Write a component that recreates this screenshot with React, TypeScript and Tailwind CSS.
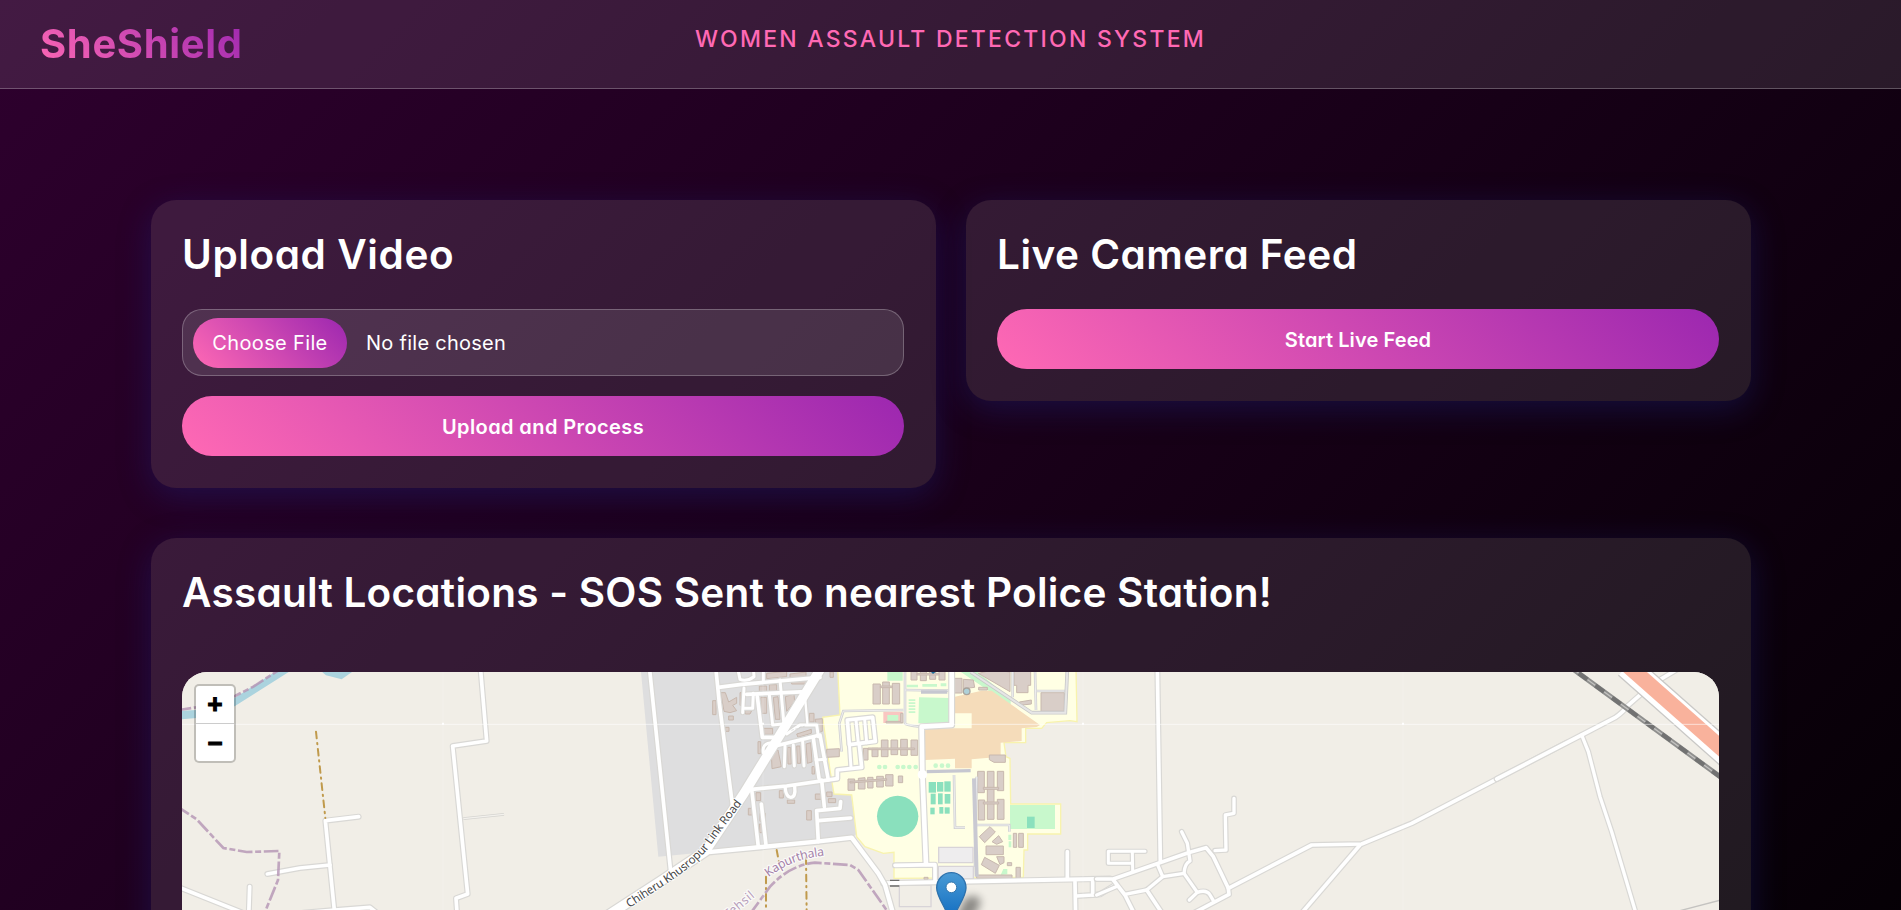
type Road = [d: string, width?: number];

function Roads({ items }: { items: Road[] }) {
  return (
    <g fill="none" strokeLinecap="round" strokeLinejoin="round">
      {items.map(([d, w = 11], i) => (
        <path key={`c${i}`} d={d} stroke="#d9d8d5" strokeWidth={w + 7} />
      ))}
      {items.map(([d, w = 11], i) => (
        <path key={`f${i}`} d={d} stroke="#ffffff" strokeWidth={w} />
      ))}
    </g>
  );
}

function Boundary({ d }: { d: string }) {
  return <path d={d} fill="none" stroke="#b493b4" strokeOpacity="0.8" strokeWidth="8" strokeDasharray="44 8 18 8" />;
}

function Track({ d }: { d: string }) {
  return <path d={d} fill="none" stroke="#c09a4c" strokeWidth="6" strokeLinecap="round" strokeDasharray="20 14 4 14" />;
}

const westRoads: Road[] = [
  ["M931 20L950 243L848 258L893 702L858 715L862 770"],
  ["M566 470L466 482L495 770"],
  ["M480 615L390 624L292 642"],
  ["M400 758L495 750L600 742L625 762"],
  ["M20 679L235 765"],
  ["M239 680L236 770"],
];

const townRoads: Road[] = [
  ["M148 20L212 635"],
  ["M347 20L358 130L398 440"],
  ["M355 82L425 73L660 52"],
  ["M440 103L620 95"],
  ["M412 20L420 58Q440 66 462 50L460 20", 9],
  ["M432 84L428 158", 9],
  ["M432 145L458 145L460 100", 9],
  ["M472 110L487 232L525 232"],
  ["M508 105L518 195L570 190", 9],
  ["M540 60L552 195", 9],
  ["M490 20L490 66", 9],
  ["M615 110L622 190", 7],
  ["M560 222L600 195L650 195L655 230", 9],
  ["M510 262L600 240L660 225L685 360"],
  ["M518 248Q485 248 490 278L510 270", 9],
  ["M555 258L553 320", 9],
  ["M580 255L583 318", 9],
  ["M608 245L612 318", 9],
  ["M640 235L657 355"],
  ["M648 300L676 298", 9],
  ["M455 388L560 378L712 356L712 330L785 322L778 255"],
  ["M742 180L818 172L826 244L748 254L742 180"],
  ["M748 250L753 322", 9],
  ["M768 180L775 250", 9],
  ["M794 178L800 248", 9],
  ["M455 388L475 560"],
  ["M484 432L498 555"],
  ["M555 380Q558 412 572 412Q588 412 584 380", 10],
  ["M665 360L673 440"],
  ["M722 425L720 445L650 452L655 545"],
  ["M655 482L752 474"],
  ["M310 578L650 545L755 533L835 640L855 675L882 770", 13],
  ["M668 16L432 400L315 575L180 665L10 775", 28],
];

const campusRoads: Road[] = [
  ["M305 20L305 195L215 200L217 340L228 612", 14],
  ["M135 616L255 614L255 665"],
  ["M100 670L780 656", 12],
  ["M652 575L652 655"],
  ["M675 665L677 770"],
  ["M728 665L728 705L680 708"],
  ["M728 705L750 703L800 672"],
];

const villageRoads: Road[] = [
  ["M172 20L181 605"],
  ["M-10 657L40 657L175 610L265 578L318 563L340 590L385 685L635 555L785 552L935 490L1400 248"],
  ["M345 572L378 570L376 465L402 460L402 415", 10],
  ["M245 515L262 550L270 603Q254 610 252 640L188 650L172 612", 10],
  ["M252 640L292 697L268 720", 10],
  ["M292 697Q320 688 330 705L340 722", 10],
  ["M385 685L387 703L270 765"],
  ["M188 650L140 690L75 703", 10],
  ["M140 690L190 765"],
  ["M40 660L75 705L105 765"],
  ["M-10 705L48 680", 10],
  ["M780 555L600 765"],
  ["M135 574L25 574L25 610L95 610", 9],
  ["M97 576L98 633", 9],
];

const eastRoads: Road[] = [
  ["M-10 417L245 285L345 233Q370 216 380 200L428 158"],
  ["M245 285L265 335L300 470L335 575L408 820", 10],
  ["M470 125L535 86"],
];

const serviceRoads = [
  "M165 30L165 190Q168 196 210 200",
  "M-25 275L-32 190L-20 153L160 150",
  "M165 90L295 92",
  "M312 345L315 503L345 503",
  "M380 495L478 495L478 515",
  "M488 30L488 112",
  "M555 30L558 150",
  "M560 93L648 93",
  "M375 620L380 350",
];

const townBuildings = [
  "M338 122h10v42h-10z", "M362 98h14l10 28 24-14v18l-12 6 12 16-20 6-18-4z", "M386 168h14v12h-14z", "M375 202h12v12h-12z",
  "M420 98h12v38h-12z", "M478 78h22v20h-22z", "M508 74h22v20h-22z", "M500 40l60-6v16l-60 6z", "M570 42l48-6v14l-48 4z",
  "M482 112h18v48h-18z", "M520 112l14-2 6 68h-14z", "M556 110l26-8 2 22-24 30z", "M490 205h28v18h-28z", "M474 245h8v36h-8z",
  "M514 280l20-10 10 50-28 6z", "M562 262l10 0 2 50h-10z", "M590 258l10 0 2 52h-10z", "M618 252l14-4 4 58-14 4z", "M628 160l14 0 0 26h-14z",
  "M645 178l22-2v38h-12z", "M680 268l38-2v24l-38 2z", "M538 392h12v22h-12z", "M562 420h22v10h-22z", "M468 398h14v24h-14z",
  "M445 445h12v20h-12z", "M480 460h16v24h-16z", "M478 492h10v26h-10z", "M620 452h14v28h-14z", "M646 402h18v16h-18z", "M680 396h16v14h-16z",
  "M685 416h22v12h-22z", "M636 320h8v22h-8z", "M590 222l44-14v12l-40 12z", "M575 60h50v12h-50z", "M690 36h10v16h-10z", "M436 148l20 2-6 12h-14z",
];

const campusBuildings = [
  "M69 72h22v60h-22z", "M98 66h20v66h-20z", "M127 70h22v62h-22z", "M91 78h36v5h-36z",
  "M183 30h18v30h-18z", "M211 30h18v32h-18z", "M239 30h18v28h-18z", "M267 30h18v30h-18z", "M201 40h66v5h-66z",
  "M573 98h70v56h-70z", "M310 55h26v44h-26z", "M340 58l30 2 4 22-34 4z", "M385 40L430 30L480 36L480 95z", "M492 30h50v46h-8v22h-34v-22h-8z",
  "M386 82h26v8h-26z", "M508 126l36-6v12l-36 4z",
  "M40 265h14v35h-14z", "M66 265h18v25h-18z", "M94 240h20v50h-20z", "M123 240h20v44h-20z", "M152 238h20v48h-20z", "M183 240h20v46h-20z", "M54 264h140v5h-140z",
  "M-6 357h20v34h-20z", "M25 355l20-2v34h-20z", "M53 352h16v32h-16z", "M80 349h20v32h-20z", "M107 344h22v34h-22z", "M145 348h13v20h-13z", "M0 364l110-8v5l-110 8z",
  "M383 334h20v64h-20z", "M412 334h20v144h-20z", "M442 334h19v58h-19z", "M385 420h19v60h-19z", "M442 418h20v60h-20z", "M400 382h46v6h-46z", "M400 426h46v6h-46z",
  "M388 530l32-30 16 16-32 32z", "M426 545l20-18 12 18-18 8z", "M408 558h52v26h-52z", "M440 590h22v18l-12 6z", "M404 592l44 24-12 24-42-26z",
  "M418 285h48v22h-34l-14-8z", "M490 520h10v42h-10z", "M506 520h14v42h-14z", "M498 622h13v32h-13z", "M472 608h13v9h-13z", "M380 645h106v10h-106z", "M108 184h50v5h-50z", "M152 160h7v28h-7z",
  "M222 652h12v6h-12z",
];

const courts = [
  "M236 366h22v32h-22z", "M261 366h19v29h-19z", "M283 364h19v31h-19z", "M242 401h15v32h-15z", "M264 400h14v33h-14z",
  "M284 402h17v29h-17z", "M241 443h13v20h-13z", "M268 441h12v20h-12z", "M284 442h15v19h-15z", "M531 470h23v34h-23z",
];

function MapCanvas() {
  return (
    <svg className="block" width="1538" height="238" viewBox="0 0 4614 714" fontFamily="'Noto Sans','Open Sans',sans-serif">
      <defs>
        <path id="link-road" d="M88 744L200 671Q270 626 320 572Q372 500 434 420" />
        <path id="district" d="M506 652Q575 596 674 587" />
        <path id="tehsil" d="M384 778L468 708" />
        <linearGradient id="pin" x1="0" y1="0" x2="0" y2="1">
          <stop offset="0" stopColor="#4a9bd5" />
          <stop offset="0.75" stopColor="#1a74c4" />
        </linearGradient>
        <filter id="soft" x="-50%" y="-50%" width="200%" height="200%">
          <feGaussianBlur stdDeviation="12" />
        </filter>
      </defs>
      <rect width="4614" height="714" fill="#f1eee7" />

      <g transform="translate(-36 -36)">
        <path fill="#abd3de" d="M20 153L80 150L190 116L315 36L325 26L372 26L195 138L150 160L80 174L20 179Z" />
        <path fill="#abd3de" d="M445 26L468 46L515 58L560 26Z" />
        <Boundary d="M20 151L78 142L195 108L250 80L330 28" />
        <Roads items={westRoads} />
        <path d="M880 476L1002 463" stroke="#d5d4d0" strokeWidth="8" />
        <path d="M880 476L1002 463" stroke="#f3f1ed" strokeWidth="4" />
        <Track d="M438 215L466 474" />
        <Boundary d="M20 438L80 478L160 564L230 576L328 573L324 660L280 768" />
      </g>

      <g transform="translate(1254 -36)">
        <path fill="#dededf" d="M122 26L175 590L300 578L760 530L772 520L752 400L668 172L720 165L712 26Z" />
      </g>

      <g transform="translate(2004 -36)">
        <path fill="#ffffe4" stroke="#f8f3ad" strokeWidth="4" d="M-37 26L-30 165L-82 172L-60 330L-48 402L5 405L20 530L45 560L100 580L132 577L132 655L520 652L522 570L533 570L533 522L632 522L632 432L482 432L480 295L468 290L462 248L527 248L527 205L575 205L590 188L660 182L681 185L678 26Z" />
        <g fill="#c8f8cc">
          <path d="M112 26H158V62H112ZM207 112L300 114V190H205ZM480 435H615V507H480ZM318 26H372L482 118V134L460 122Z" />
          <path d="M170 74h34v8h-34zM217 72h44v8h-44zM272 70h17v9h-17zM176 118h20v5h-20zM176 127h20v5h-20zM176 136h20v5h-20zM176 145h20v5h-20zM176 154h20v5h-20z" />
          <path d="M475 524h9v16h-9zM476 544h8v18h-8zM452 645l8-18h12v16z" />
          {[88, 105, 143, 160, 178, 197].map((x) => (
            <circle key={x} cx={x} cy="321" r="7" />
          ))}
          {[257, 276, 294].map((x) => (
            <circle key={x} cx={x} cy="317" r="7" />
          ))}
        </g>
        <path fill="#f5dcba" d="M315 110L395 92L425 92L570 195L560 201L515 205L515 243L452 248L452 290L365 298L365 325L315 325L315 296L225 300L225 205L365 205L365 160L315 160Z" />
        <path fill="#f9c6c1" d="M100 155h58v34h-58z" />
        <path fill="#c8f8cc" d="M112 165h33v18h-33z" />
        <circle cx="143" cy="469" r="62" fill="#8ae0bd" />
        <g fill="#8ae0bd">
          {courts.map((d) => (
            <path key={d} d={d} />
          ))}
        </g>
        <g fill="#eeedee" stroke="#d8d4d8" strokeWidth="4">
          <path d="M266 562h103v46h-103zM265 619h105v38h-105z" />
          <path fill="none" d="M148 675h95v65h-95z" />
        </g>
        <g fill="#d9cec8" stroke="#c8b8ae" strokeWidth="3">
          {campusBuildings.map((d) => (
            <path key={d} d={d} />
          ))}
        </g>
        <g fill="none" stroke="#d2d2d4" strokeWidth="8">
          {serviceRoads.map((d) => (
            <path key={d} d={d} />
          ))}
        </g>
        <g fill="none" stroke="#eeeeee" strokeWidth="3">
          {serviceRoads.map((d) => (
            <path key={d} d={d} />
          ))}
        </g>
        <path d="M230 335L362 332M213 96L292 96" stroke="#c6c7d0" strokeWidth="10" fill="none" />
        <path d="M372 355L380 650" stroke="#c9c9d2" strokeWidth="12" fill="none" />
        <path d="M362 36L545 158L646 158L652 30" stroke="#c9c9c9" strokeWidth="11" fill="none" />
        <path d="M362 36L545 158L646 158L652 30" stroke="#e6e6e6" strokeWidth="6" fill="none" />
        <circle cx="350" cy="94" r="10" fill="#aed0d8" stroke="#a9a39c" strokeWidth="4" />
        <path d="M243 36h14l-8 6z" fill="#1e6f9c" />
        <Roads items={campusRoads} />
        <circle cx="217" cy="344" r="14" fill="#fff" />
      </g>

      <g transform="translate(1254 -36)">
        <g fill="#d9cec8" stroke="#c8b8ae" strokeWidth="3">
          {townBuildings.map((d) => (
            <path key={d} d={d} />
          ))}
        </g>
        <Roads items={townRoads} />
        <path d="M574 211L614 199" stroke="#d0d0d0" strokeWidth="2" strokeDasharray="8 4" />
        <path d="M870 661H898M870 678H898" stroke="#6d6d6d" strokeWidth="4" />
        <Track d="M530 570L538 612" />
        <Track d="M498 650L498 760" />
        <Track d="M618 592L620 760" />
        <Boundary d="M450 762L510 680Q570 615 645 608L750 615L775 630L868 762" />
        <g stroke="#ffffff" strokeOpacity="0.75" strokeWidth="7" paintOrder="stroke" strokeLinejoin="round">
          <text fontSize="35" fill="#474747">
            <textPath href="#link-road" textLength="466">Chiheru Khusropur Link Road</textPath>
          </text>
          <text fontSize="37" fill="#a583aa">
            <textPath href="#district" textLength="182">Kapurthala</textPath>
          </text>
          <text fontSize="37" fill="#b79fbb">
            <textPath href="#tehsil" textLength="106">Tehsil</textPath>
          </text>
        </g>
      </g>

      <g transform="translate(2754 -36)">
        <Roads items={villageRoads} />
      </g>

      <g transform="translate(3954 -96)">
        <path d="M540 812L670 778" stroke="#c4c3c0" strokeWidth="4" />
        <Roads items={eastRoads} />
        <path d="M380 78L690 352" stroke="#c9c8c6" strokeWidth="79" />
        <path d="M380 78L690 352" stroke="#ffffff" strokeWidth="71" />
        <path d="M385 78L695 352" stroke="#f9b29c" strokeWidth="47" />
        <path d="M212 82L675 421" stroke="#8f8f8e" strokeWidth="15" />
        <path d="M212 82L675 421" stroke="#c2c1bf" strokeWidth="4" strokeDasharray="30 32" />
        <path d="M212 82L675 421" stroke="#727272" strokeWidth="13" strokeDasharray="32 30" strokeDashoffset="-30" />
      </g>

      <path d="M0 157H4614" stroke="#ffffff" strokeOpacity="0.6" strokeWidth="3" />
      <path d="M783 0V714M1743 0V714M2703 0V714M3663 0V714" stroke="#ffffff" strokeOpacity="0.2" strokeWidth="3" />
      <path d="M780 155h6M1740 155h6M2700 155h6M3660 155h6" stroke="#ffffff" strokeWidth="6" />

      <g transform="translate(2004 -36)">
        <path d="M310 790L345 715Q380 698 392 722Q390 750 350 790Z" fill="#000" opacity="0.42" filter="url(#soft)" />
        <path d="M304 638C278 638 260 659 260 684C260 712 290 745 304 792C318 745 348 712 348 684C348 659 330 638 304 638Z" fill="url(#pin)" stroke="#2e72ad" strokeWidth="4" />
        <circle cx="304" cy="682" r="16" fill="#fff" stroke="#3577ad" strokeWidth="3" />
      </g>
    </svg>
  );
}

const card =
  "rounded-[25px] bg-white/10 px-[31.5px] py-8 shadow-[0_8px_32px_rgba(31,38,135,0.37)]";
const heading = "h-12 text-[40.5px] leading-[46px] font-[560] text-white whitespace-nowrap";
const pill =
  "flex h-[60px] w-full items-center justify-center rounded-full bg-[linear-gradient(45deg,#ff69b4,#9c27b0)] pt-px text-[20px] font-semibold text-white whitespace-nowrap";

export default function App() {
  return (
    <div className="flex h-[910px] flex-col overflow-hidden bg-[linear-gradient(135deg,#2e002e,#000000)] bg-[length:1901px_1300px] font-['Inter','Liberation_Sans',sans-serif] [font-feature-settings:'cv11']">
      <header className="grid h-[89px] shrink-0 grid-cols-[1fr_auto_1fr] items-start border-b border-white/25 bg-white/10 px-10">
        <div className="mt-[14px] w-fit bg-[linear-gradient(45deg,#ff69b4,#9c27b0)] bg-clip-text text-[40px] leading-[60px] font-bold tracking-[0.65px] text-transparent">
          SheShield
        </div>
        <p className="mt-[21px] text-[23px] leading-9 font-medium tracking-[2.24px] whitespace-nowrap text-[#ff69b4]">
          WOMEN ASSAULT DETECTION SYSTEM
        </p>
      </header>

      <main className="mx-auto mt-[111px] flex w-[1600px] flex-col">
        <div className="grid grid-cols-2 items-start gap-[30px]">
          <section className={card}>
            <h2 className={`${heading} tracking-[0.6px]`}>Upload Video</h2>
            <div className="mt-[29px] flex h-[67px] items-center rounded-[20px] border border-white/25 bg-white/10 pl-[10px]">
              <button className="h-[50px] w-[154px] rounded-full bg-[linear-gradient(45deg,#ff69b4,#9c27b0)] pt-px text-[20px] tracking-[0.35px] whitespace-nowrap text-white">
                Choose File
              </button>
              <span className="mt-px ml-[19px] text-[20px] tracking-[0.27px] text-white">No file chosen</span>
            </div>
            <button className={`${pill} mt-5 tracking-[0.4px]`}>Upload and Process</button>
          </section>

          <section className={card}>
            <h2 className={`${heading} tracking-[0.5px]`}>Live Camera Feed</h2>
            <button className={`${pill} mt-[29px] tracking-[0.1px]`}>Start Live Feed</button>
          </section>
        </div>

        <section className={`${card} mt-[50px] h-[600px]`}>
          <h2 className={`${heading} tracking-[0.25px]`}>Assault Locations - SOS Sent to nearest Police Station!</h2>
          <div className="relative mt-[54px] h-[500px] overflow-hidden rounded-[25px] bg-[#f1eee7]">
            <MapCanvas />
            <div className="absolute top-3 left-3 flex w-[42px] flex-col overflow-hidden rounded-[5px] border-2 border-black/20 bg-white bg-clip-padding font-['DejaVu_Sans_Mono',monospace] text-[24px] font-bold text-black [-webkit-text-stroke:1.2px_black]">
              <button className="h-[38px] border-b border-[#ccc] leading-[37px]">+</button>
              <button className="h-[37px] leading-[36px]">−</button>
            </div>
          </div>
        </section>
      </main>
    </div>
  );
}
